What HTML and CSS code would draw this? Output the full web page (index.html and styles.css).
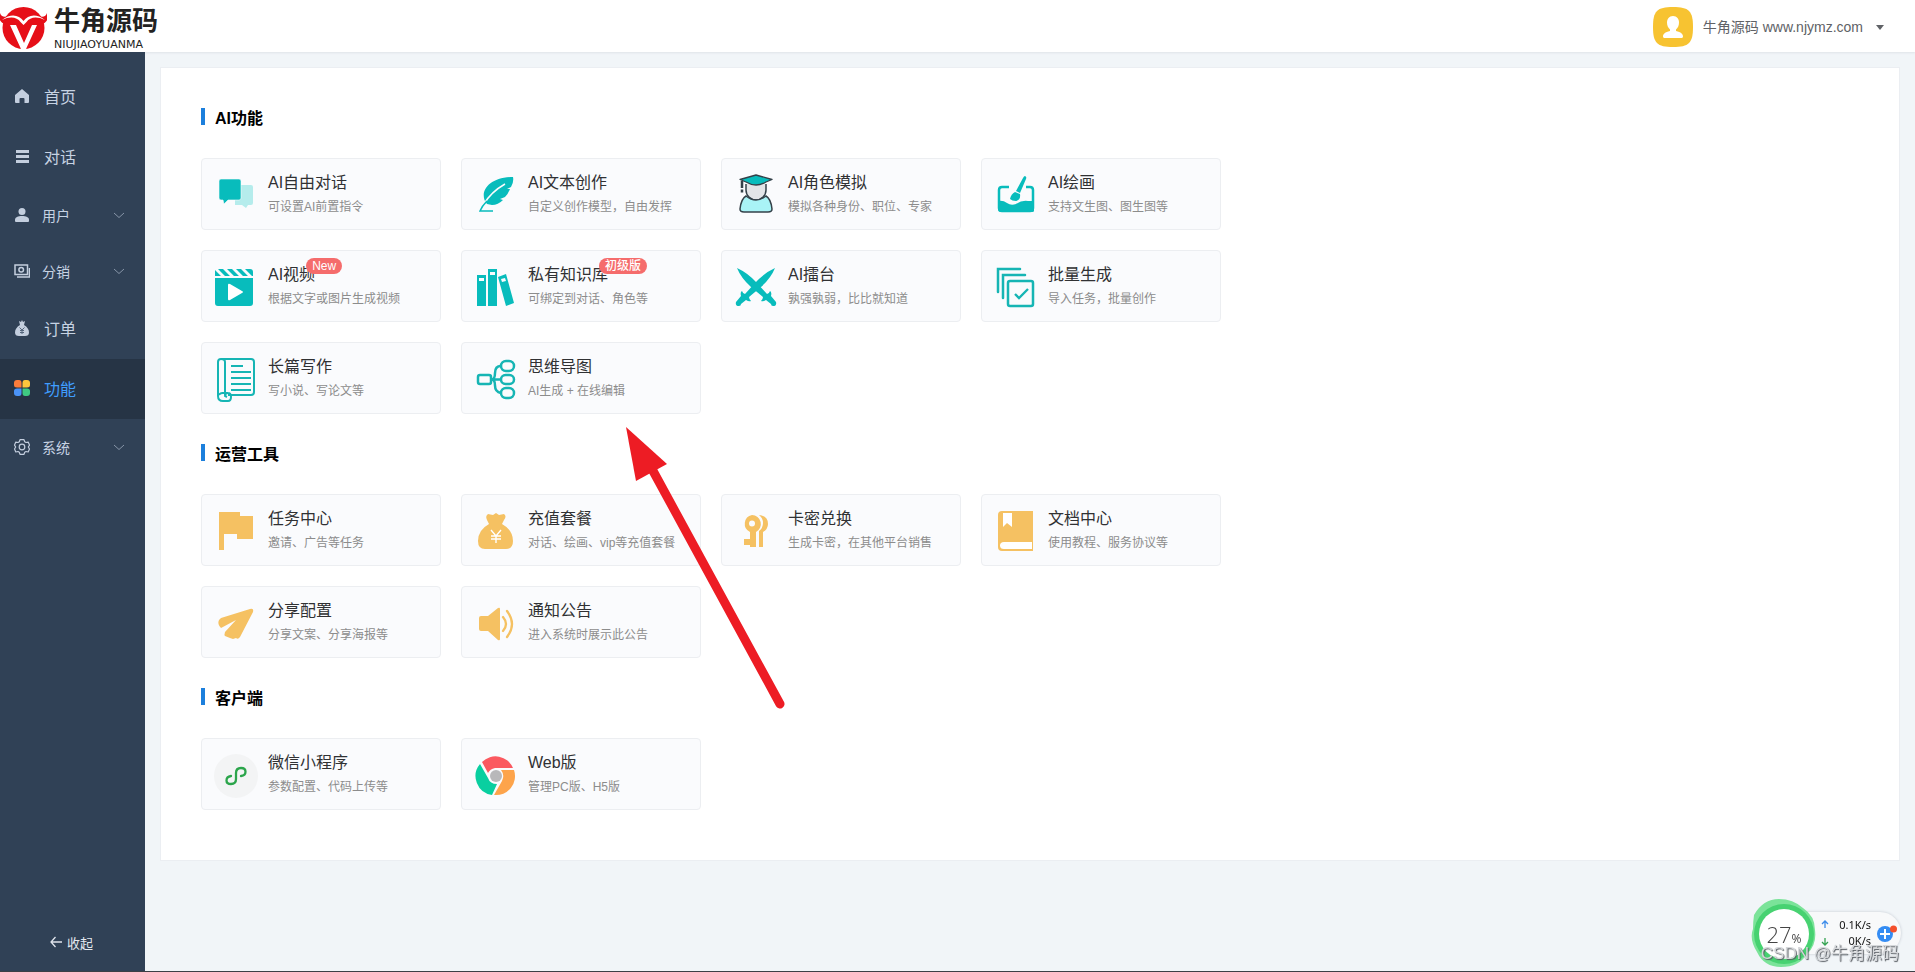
FILE: index.html
```html
<!DOCTYPE html>
<html lang="zh-CN">
<head>
<meta charset="utf-8">
<meta name="viewport" content="width=device-width, initial-scale=1">
<title>牛角源码</title>
<link rel="stylesheet" href="styles.css">
</head>
<body>
<header class="topbar">
  <a class="brand" href="#">
    <svg class="brand-mark" viewBox="0 0 47 44" aria-hidden="true">
      <circle cx="23.500" cy="23" r="21" fill="#e60f18"/>
      <path d="M8 11C3 13-1 10 0 5c-3 7 0 13 5 14zM39 11c5 2 9-1 8-6 3 7 0 13-5 14z" fill="#e60f18"/>
      <path d="M2 15c9-7 17-5 21.500 1C28 10 36 8 45 15c-8-4-15-3-18.500 2l-3 3-3-3C17 12 10 11 2 15z" fill="#fff"/>
      <path d="M10 20h6l8 18 8-18h5L26 44h-5z" fill="#fff"/>
    </svg>
    <span class="brand-text">
      <span class="brand-name">牛角源码</span>
      <span class="brand-latin">NIUJIAOYUANMA</span>
    </span>
  </a>
  <button class="account" type="button">
    <svg class="avatar" viewBox="0 0 40 40" aria-hidden="true">
      <path d="M20 0c16 0 20 4 20 20s-4 20-20 20S0 36 0 20 4 0 20 0z" fill="#f7c331"/>
      <path d="M20 9c4 0 6 3 6 6.500 0 3-1 5-3 7v1.500c5 1 7 3 7 5.500 0 1-1 1.500-2 1.500H12c-1 0-2-.5-2-1.500 0-2.500 2-4.500 7-5.500v-1.500c-2-2-3-4-3-7C14 12 16 9 20 9z" fill="#fff"/>
    </svg>
    <span class="account-name">牛角源码 www.njymz.com</span>
    <svg class="caret" viewBox="0 0 8 5" aria-hidden="true"><path d="M0 0h8L4 5z" fill="#606266"/></svg>
  </button>
</header>

<div class="shell">
  <aside class="sidebar">
    <nav class="menu">
      <a class="menu-item" href="#">
        <svg viewBox="0 0 16 16" aria-hidden="true"><path d="M8 1l7 6v7q0 1-1 1h-3.500v-4q0-1-1-1h-3q-1 0-1 1v4H2q-1 0-1-1V7z" fill="#c3cede"/></svg>首页</a>
      <a class="menu-item" href="#">
        <svg viewBox="0 0 16 16" aria-hidden="true"><path d="M2 2h13v3H2zm0 5h13v3H2zm0 5h13v3H2z" fill="#c3cede"/></svg>对话</a>
      <button class="menu-item menu-group" type="button">
        <svg viewBox="0 0 16 16" aria-hidden="true"><circle cx="8" cy="4.500" r="3.500" fill="#c3cede"/><path d="M1 13c0-3 3-4 7-4s7 1 7 4v1q0 1-1 1H2q-1 0-1-1z" fill="#c3cede"/></svg>用户
        <svg class="chevron" viewBox="0 0 12 12" aria-hidden="true"><path d="M1 4l5 4.500L11 4" fill="none" stroke="#8795a8"/></svg>
      </button>
      <button class="menu-item menu-group" type="button">
        <svg viewBox="0 0 16 16" aria-hidden="true"><path d="M1 2h12.500v9.500H1zM3 14h12.500V5" fill="none" stroke="#c3cede" stroke-width="1.500"/><circle cx="7.200" cy="6.700" r="2.300" fill="none" stroke="#c3cede" stroke-width="1.500"/></svg>分销
        <svg class="chevron" viewBox="0 0 12 12" aria-hidden="true"><path d="M1 4l5 4.500L11 4" fill="none" stroke="#8795a8"/></svg>
      </button>
      <a class="menu-item" href="#">
        <svg viewBox="0 0 16 16" aria-hidden="true"><path d="M5 1l2 1 1-2 1 2 2-1-1 4q5 3 5 7.500Q15 16 11 16H5q-4 0-4-3.500Q1 8 6 5z" fill="#c3cede"/><path d="M5.500 7.500L8 10l2.500-2.500M8 10v4M6 10.500h4M6 12.500h4" stroke="#55667c" fill="none"/></svg>订单</a>
      <a class="menu-item is-active" href="#" aria-current="page">
        <svg viewBox="0 0 16 16" aria-hidden="true"><path d="M3 0h2q2.500 0 2.500 3v4.500H3q-3 0-3-2.500V3q0-3 3-3z" fill="#fb7c3b"/><path d="M11 0h2q3 0 3 3v2q0 2.500-3 2.500H8.500V3q0-3 2.500-3z" fill="#fdc63c"/><path d="M3 8.500h4.500V13q0 3-2.500 3H3q-3 0-3-3v-2q0-2.500 3-2.500z" fill="#4a93f7"/><path d="M8.500 8.500H13q3 0 3 2.500v2q0 3-3 3h-2q-2.500 0-2.500-3z" fill="#3fca82"/></svg>功能</a>
      <button class="menu-item menu-group" type="button">
        <svg viewBox="0 0 16 16" aria-hidden="true"><path d="M6 .7h4l.7 2 1.300.8 2.200-.4 1.300 3-1.200 1.900 1.200 2-1.300 3-2.200-.5-1.300.8-.7 2H6l-.7-2-1.300-.8-2.200.5-1.300-3L1.700 8 .5 6.100l1.300-3 2.200.4 1.300-.8z" fill="none" stroke="#c3cede" stroke-width="1.200" stroke-linejoin="round"/><circle cx="8" cy="8" r="2.800" fill="none" stroke="#c3cede" stroke-width="1.200"/></svg>系统
        <svg class="chevron" viewBox="0 0 12 12" aria-hidden="true"><path d="M1 4l5 4.500L11 4" fill="none" stroke="#8795a8"/></svg>
      </button>
    </nav>
    <button class="collapse" type="button">
      <svg viewBox="0 0 12 12" aria-hidden="true"><path d="M5.500 1L1 6l4.500 5M1 6h11" fill="none" stroke="#dfe4ec" stroke-width="1.300"/></svg>收起
    </button>
  </aside>

  <main class="content">
    <div class="panel">
      <section>
        <h2 class="section-title">AI功能</h2>
        <div class="cards">
          <a class="card" href="#">
            <svg class="card-icon" viewBox="0 0 44 44" aria-hidden="true"><path d="M24 11h13q2 0 2 2v16q0 2-2 2h-3l-2 3-4-3h-7V11z" fill="#b5ecec"/><path d="M7 5h18q2 0 2 2v17q0 2-2 2H14l-4 4-1-4H7q-2 0-2-2V7q0-2 2-2z" fill="#08bcbc" stroke="#fafbfd" stroke-width=".6"/></svg>
            <span class="card-body"><span class="card-title">AI自由对话</span><span class="card-desc">可设置AI前置指令</span></span>
          </a>
          <a class="card" href="#">
            <svg class="card-icon" viewBox="0 0 44 44" aria-hidden="true"><path d="M39 3q1 5-2 10l-4 2h3q-2 5-5 8l-5 2 3 1q-5 5-11 5l-5-1C4 19 14 3 39 3z" fill="#08bcbc"/><path d="M31 10Q17 18 10 30" fill="none" stroke="#fafbfd" stroke-width="1.500"/><path d="M13 27Q8 32 6 37h13" fill="none" stroke="#08bcbc" stroke-width="1.500"/></svg>
            <span class="card-body"><span class="card-title">AI文本创作</span><span class="card-desc">自定义创作模型，自由发挥</span></span>
          </a>
          <a class="card" href="#">
            <svg class="card-icon" viewBox="0 0 44 44" aria-hidden="true"><path d="M12 10v6a10 10 0 0 0 20 0v-6" fill="#e3e5e8" stroke="#344149" stroke-width="1.500"/><path d="M6 5.500L22 1l16 4.500-6 2.500q-10 6-20 0z" fill="#08bcbc" stroke="#344149" stroke-width="1.300" stroke-linejoin="round"/><path d="M8 7v12" stroke="#344149" stroke-width="2.500" stroke-dasharray="7 1.500 3"/><path d="M12 22q10 8 20 0 5 3 6 13 0 3-4 3H10q-4 0-4-3 1-10 6-13z" fill="#a9f3f6" stroke="#344149" stroke-width="1.500"/></svg>
            <span class="card-body"><span class="card-title">AI角色模拟</span><span class="card-desc">模拟各种身份、职位、专家</span></span>
          </a>
          <a class="card" href="#">
            <svg class="card-icon" viewBox="0 0 44 44" aria-hidden="true"><path d="M15 13H8q-3 0-3 3v18q0 3 3 3h28q3 0 3-3V16q0-3-3-3h-4" fill="none" stroke="#08bcbc" stroke-width="2.500"/><path d="M4 27q5-1 9 2t9 1q6-4 12-3h6v10q0 1-2 1H7q-3 0-3-3z" fill="#08bcbc"/><path d="M31 2q2 1 1 3l-6 14-4-2 7-13q1-2 2-2zM21 18l5 2q1 6-4 7-4 0-6-2 1-5 5-7z" fill="#08bcbc"/></svg>
            <span class="card-body"><span class="card-title">AI绘画</span><span class="card-desc">支持文生图、图生图等</span></span>
          </a>
          <a class="card" href="#">
            <svg class="card-icon" viewBox="0 0 44 44" aria-hidden="true"><path d="M1 12h38v25q0 3-3 3H4q-3 0-3-3zM1 4l6 6H1zM4 3h5l7 7h-5zM13 3h5l7 7h-5zM22 3h5l7 7h-5zM31 3h5q3 0 3 3v4h-1z" fill="#08bcbc"/><path d="M14 19q0-2 2-1l12 7q2 1 0 2l-12 7q-2 1-2-1z" fill="#fff"/></svg>
            <span class="card-body"><span class="card-title">AI视频<span class="badge">New</span></span><span class="card-desc">根据文字或图片生成视频</span></span>
          </a>
          <a class="card" href="#">
            <svg class="card-icon" viewBox="0 0 44 44" aria-hidden="true"><path d="M3 9h9v31H3zM14 3h9v37h-9zM24 11l8-3 8 29-8 3z" fill="#08bcbc"/><path d="M5 12h5v3H5zM16 6h5v3h-5zM27 13l4-1 1 3-4 1z" fill="#fafbfd"/></svg>
            <span class="card-body"><span class="card-title">私有知识库<span class="badge">初级版</span></span><span class="card-desc">可绑定到对话、角色等</span></span>
          </a>
          <a class="card" href="#">
            <svg class="card-icon" viewBox="0 0 44 44" aria-hidden="true"><path d="M3 2q11 5 20 15l10 11q2 0 3-3 2 1 1 5l5 6q1 4-3 4-2 0-2-2l-5-4q-3 2-5 1 2-2 2-4L17 21Q7 12 3 2z" fill="#08bcbc"/><path d="M41 2Q30 7 21 17L11 28q-2 0-3-3-2 1-1 5l-5 6q-1 4 3 4 2 0 2-2l5-4q3 2 5 1-2-2-2-4l12-10Q37 12 41 2z" fill="#08bcbc"/></svg>
            <span class="card-body"><span class="card-title">AI擂台</span><span class="card-desc">孰强孰弱，比比就知道</span></span>
          </a>
          <a class="card" href="#">
            <svg class="card-icon" viewBox="0 0 44 44" aria-hidden="true"><path d="M4 26V3h22M9 32V9h22" fill="none" stroke="#16b5b4" stroke-width="2.500" stroke-linecap="round"/><rect x="14" y="15" width="25" height="25" rx="2" fill="none" stroke="#16b5b4" stroke-width="2.500"/><path d="M21 28l4 4 9-9" fill="none" stroke="#16b5b4" stroke-width="2.300"/></svg>
            <span class="card-body"><span class="card-title">批量生成</span><span class="card-desc">导入任务，批量创作</span></span>
          </a>
          <a class="card" href="#">
            <svg class="card-icon" viewBox="0 0 44 44" aria-hidden="true"><path d="M7 1h30q3 0 3 3v30q0 3-3 3H14M11 37V4q0-3-4-3-3 0-3 3v34q0 5 5 5h5q3 0 3-4t-3-4-3 3l2 1M5 37q1-3 9-2" fill="none" stroke="#16b5b4" stroke-width="2"/><path d="M17 8h12M17 14h20M17 20h20M17 26h20M17 32h20" stroke="#16b5b4" stroke-width="2.200"/></svg>
            <span class="card-body"><span class="card-title">长篇写作</span><span class="card-desc">写小说、写论文等</span></span>
          </a>
          <a class="card" href="#">
            <svg class="card-icon" viewBox="0 0 44 44" aria-hidden="true"><g fill="none" stroke="#16b5b4" stroke-width="2.500"><rect x="4" y="17" width="13" height="9" rx="2"/><rect x="27" y="3" width="13" height="10" rx="5"/><rect x="27" y="17" width="13" height="9" rx="4.500"/><rect x="27" y="30" width="13" height="10" rx="5"/><path d="M17 21.500h10M27 8q-6 0-6 7t-4 6.500q4-.5 4 6t6 7.500"/></g></svg>
            <span class="card-body"><span class="card-title">思维导图</span><span class="card-desc">AI生成 + 在线编辑</span></span>
          </a>
        </div>
      </section>

      <section>
        <h2 class="section-title">运营工具</h2>
        <div class="cards">
          <a class="card" href="#">
            <svg class="card-icon" viewBox="0 0 44 44" aria-hidden="true"><path d="M5 2h21v4h13v23H23v-5H10v16H5z" fill="#f5c162"/></svg>
            <span class="card-body"><span class="card-title">任务中心</span><span class="card-desc">邀请、广告等任务</span></span>
          </a>
          <a class="card" href="#">
            <svg class="card-icon" viewBox="0 0 44 44" aria-hidden="true"><path d="M14 4l5 1 3-2 3 2 5-1q3 2 0 6l-2 4q11 6 11 17 0 8-7 8H11q-7 0-7-8 0-11 11-17l-2-4q-2-4 1-6z" fill="#f5c162"/><path d="M17 20l5 6 5-6M22 26v7M17 26h10M17 29h10" fill="none" stroke="#fff" stroke-width="1.400"/></svg>
            <span class="card-body"><span class="card-title">充值套餐</span><span class="card-desc">对话、绘画、vip等充值套餐</span></span>
          </a>
          <a class="card" href="#">
            <svg class="card-icon" viewBox="0 0 44 44" aria-hidden="true"><path fill-rule="evenodd" d="M18 5a9 9 0 0 1 4 17v15h-6v-2h-6v-6h6v-7A9 9 0 0 1 18 5zm0 5.500a3 3 0 1 0 0 6 3 3 0 0 0 0-6z" fill="#f5c162"/><path d="M25 5q9 1 9 9 0 5-5 8v15h-4V21q4-3 4-8t-4-8z" fill="#f5c162"/></svg>
            <span class="card-body"><span class="card-title">卡密兑换</span><span class="card-desc">生成卡密，在其他平台销售</span></span>
          </a>
          <a class="card" href="#">
            <svg class="card-icon" viewBox="0 0 44 44" aria-hidden="true"><path d="M8 1h31v40H8q-4 0-4-4V5q0-4 4-4z" fill="#f5c162"/><path d="M9 3h9v14l-5-4-4 4zM38 32v7H10q-4 0-4-3.500T10 32z" fill="#fff"/></svg>
            <span class="card-body"><span class="card-title">文档中心</span><span class="card-desc">使用教程、服务协议等</span></span>
          </a>
          <a class="card" href="#">
            <svg class="card-icon" viewBox="0 0 44 44" aria-hidden="true"><path d="M7 16l29-9q4-1 3 3L26 35q-2 3-4 1l-3 1-3-1-5-2q-1-1 0-4l11-12-15 8q-4-4-2-8z" fill="#f5c162"/></svg>
            <span class="card-body"><span class="card-title">分享配置</span><span class="card-desc">分享文案、分享海报等</span></span>
          </a>
          <a class="card" href="#">
            <svg class="card-icon" viewBox="0 0 44 44" aria-hidden="true"><path d="M7 14h7L24 6q2-1 2 1v30q0 2-2 1L14 29H7q-2 0-2-2V16q0-2 2-2z" fill="#f5c162"/><path d="M29 15q6 7 0 14M33 9q10 13 0 26" fill="none" stroke="#f5c162" stroke-width="2.300" stroke-linecap="round"/></svg>
            <span class="card-body"><span class="card-title">通知公告</span><span class="card-desc">进入系统时展示此公告</span></span>
          </a>
        </div>
      </section>

      <section>
        <h2 class="section-title">客户端</h2>
        <div class="cards">
          <a class="card" href="#">
            <svg class="card-icon" viewBox="0 0 44 44" aria-hidden="true"><circle cx="22" cy="22" r="22" fill="#f3f4f5"/><path d="M17 22c-6 1-6 8 0 8q5 0 5-5v-6q0-5 5-5c6 0 6 7 0 8" fill="none" stroke="#2ba54b" stroke-width="2.300" stroke-linecap="round"/></svg>
            <span class="card-body"><span class="card-title">微信小程序</span><span class="card-desc">参数配置、代码上传等</span></span>
          </a>
          <a class="card" href="#">
            <svg class="card-icon" viewBox="0 0 44 44" aria-hidden="true"><path d="M8 8a19 19 0 0 1 31 6H21q-5 1-7 5z" fill="#fb5960"/><path d="M40 16a19 19 0 0 1-20 25l8-14q3-6-1-11z" fill="#fda44b"/><path d="M6 10l8 14q2 6 9 6l-5 11A19 19 0 0 1 6 10z" fill="#09cfa0"/><circle cx="22" cy="22" r="6" fill="#b8b8ba"/></svg>
            <span class="card-body"><span class="card-title">Web版</span><span class="card-desc">管理PC版、H5版</span></span>
          </a>
        </div>
      </section>

      <svg class="pointer" viewBox="0 0 160 282" aria-hidden="true"><path d="M26 42l128 235" stroke="#ed1c24" stroke-width="9" stroke-linecap="round"/><path d="M0 0l41 37-31 17z" fill="#ed1c24"/></svg>
    </div>
  </main>
</div>

<div class="monitor">
  <div class="speeds">
    <svg class="arrows" viewBox="0 0 8 26" aria-hidden="true"><path d="M4 8V1M1 4l3-3 3 3" fill="none" stroke="#3b8bea" stroke-width="1.300"/><path d="M4 18v7M1 22l3 3 3-3" fill="none" stroke="#35a352" stroke-width="1.300"/></svg>
    <span class="rates"><span>0.1K/s</span><span>0K/s</span></span>
    <svg class="plus" viewBox="0 0 20 18" aria-hidden="true"><circle cx="8" cy="10" r="8" fill="#348cf3"/><path d="M8 5v10M3 10h10" stroke="#fff" stroke-width="2"/><circle cx="16.500" cy="5" r="3.500" fill="#f4502c"/></svg>
  </div>
  <div class="gauge">
    <svg class="gauge-ring" viewBox="0 0 66 70" aria-hidden="true"><path d="M3 17Q12 1 28 1q14 0 24 9 12 8 12 22 2 15-8 24-8 13-26 13-17 0-24-15-8-13-4-23 0-7 1-14z" fill="#7be399"/><circle cx="33" cy="36" r="30" fill="#47d271"/><circle cx="33" cy="36" r="25" fill="#fff"/></svg>
    <span class="gauge-value">27<small>%</small></span>
  </div>
  <span class="watermark">CSDN @牛角源码</span>
</div>
</body>
</html>
```
FILE: styles.css
```css
* { box-sizing: border-box; }

body {
  margin: 0;
  min-height: 100vh;
  display: flex;
  flex-direction: column;
  background: #f1f5f8;
  border-bottom: 1px solid #3c4046;
  color: #303133;
  font-family: "Liberation Sans", "Noto Sans CJK SC", sans-serif;
  font-size: 14px;
}

a { color: inherit; text-decoration: none; }

button {
  border: 0;
  padding: 0;
  background: none;
  color: inherit;
  font: inherit;
  cursor: pointer;
}

.topbar {
  display: flex;
  justify-content: space-between;
  align-items: center;
  height: 52px;
  padding-right: 31px;
  background: #fff;
  box-shadow: 0 1px 2px #dfe3e8;
}

.brand { display: flex; align-items: center; gap: 7px; padding-top: 2px; }
.brand-mark { width: 47px; height: 44px; }
.brand-text { display: flex; flex-direction: column; padding-top: 2px; color: #222; }

.brand-name {
  font-family: "Liberation Serif", "Noto Sans CJK SC", serif;
  font-size: 26px;
  font-weight: 700;
  line-height: 34px;
}

.brand-latin {
  font-family: "DejaVu Sans", sans-serif;
  font-size: 11px;
  line-height: 12px;
}

.account {
  display: flex;
  align-items: center;
  gap: 10px;
  padding-top: 2px;
  color: #606266;
}
.account-name { padding-bottom: 2px; }
.avatar { width: 40px; height: 40px; }
.caret { width: 8px; height: 5px; margin-left: 3px; }

.shell { flex: 1; display: flex; }

.sidebar {
  flex: none;
  display: flex;
  flex-direction: column;
  justify-content: space-between;
  width: 145px;
  padding: 15px 0 19px;
  background: #304156;
  color: #c7d3e3;
}

.menu { display: flex; flex-direction: column; }

.menu-item {
  display: flex;
  align-items: center;
  gap: 14px;
  height: 60px;
  padding: 0 20px 3px 14px;
  font-size: 16px;
}
.menu-item svg { width: 16px; height: 16px; }
.menu-item.menu-group { height: 56px; gap: 12px; padding-bottom: 0; font-size: 14px; }
.menu-item .chevron { width: 12px; height: 12px; margin-left: auto; }
.menu-item.is-active { background: #263445; color: #409eff; }

.collapse {
  display: flex;
  align-items: center;
  justify-content: center;
  gap: 5px;
  height: 20px;
  padding-right: 2px;
  color: #e3e8ef;
  font-size: 13px;
}
.collapse svg { width: 12px; height: 12px; }

.content { flex: 1; min-width: 0; padding: 15px; }

.panel {
  position: relative;
  padding: 10px 40px 50px;
  background: #fff;
  border: 1px solid #ebeef2;
}

.section-title {
  display: flex;
  align-items: center;
  gap: 10px;
  height: 80px;
  margin: 0;
  padding-bottom: 3px;
  color: #000;
  font-size: 16px;
}
.section-title::before {
  content: "";
  width: 4px;
  height: 17px;
  background: #1c7fdc;
}

.cards {
  display: grid;
  grid-template-columns: repeat(auto-fill, 240px);
  gap: 20px;
  max-width: 1020px;
}

.card {
  display: flex;
  align-items: center;
  gap: 10px;
  height: 72px;
  padding: 2px 0 0 12px;
  background: #fafbfd;
  border: 1px solid #eceef1;
  border-radius: 4px;
  white-space: nowrap;
}
.card-icon { flex: none; width: 44px; height: 44px; margin-top: 2px; }

.card-body { display: flex; flex-direction: column; align-items: flex-start; }
.card-title { position: relative; font-size: 16px; line-height: 24px; }
.card-desc { color: #8c8c8c; font-size: 12px; line-height: 24px; }

.badge {
  position: absolute;
  left: 100%;
  top: -5px;
  margin-left: -9px;
  padding: 0 6px;
  border-radius: 8px;
  background: #f56c6c;
  color: #fff;
  font-size: 12px;
  font-weight: 500;
  line-height: 16px;
}

.pointer {
  position: absolute;
  left: 465px;
  top: 359px;
  width: 160px;
  height: 282px;
  pointer-events: none;
}

.monitor {
  position: fixed;
  right: 14px;
  bottom: 4px;
  display: flex;
  align-items: center;
  flex-direction: row-reverse;
}

.speeds {
  display: flex;
  align-items: center;
  gap: 6px;
  height: 42px;
  margin-left: -16px;
  padding: 0 4px 0 20px;
  border-radius: 0 21px 21px 0;
  background: #f8f9fa;
  box-shadow: 0 0 3px #c3c8d0;
}
.arrows { width: 8px; height: 26px; }

.rates {
  display: flex;
  flex-direction: column;
  align-items: flex-end;
  width: 36px;
  color: #111;
  font-family: "Noto Sans", sans-serif;
  font-size: 11px;
  line-height: 16px;
}
.plus { width: 20px; height: 18px; }

.gauge { position: relative; width: 66px; height: 70px; }
.gauge-ring { width: 66px; height: 70px; }

.gauge-value {
  position: absolute;
  inset: 2px 0 0;
  display: flex;
  align-items: baseline;
  justify-content: center;
  color: #444;
  font-family: "Open Sans", sans-serif;
  font-size: 22px;
  font-weight: 300;
  line-height: 68px;
}
.gauge-value small { font-size: 12px; font-weight: 400; }

.watermark {
  position: absolute;
  right: 2px;
  bottom: 4px;
  color: #d5d7da;
  font-size: 17px;
  line-height: 20px;
  text-shadow: 1px 1px 1px #555a60;
  white-space: nowrap;
}
```
